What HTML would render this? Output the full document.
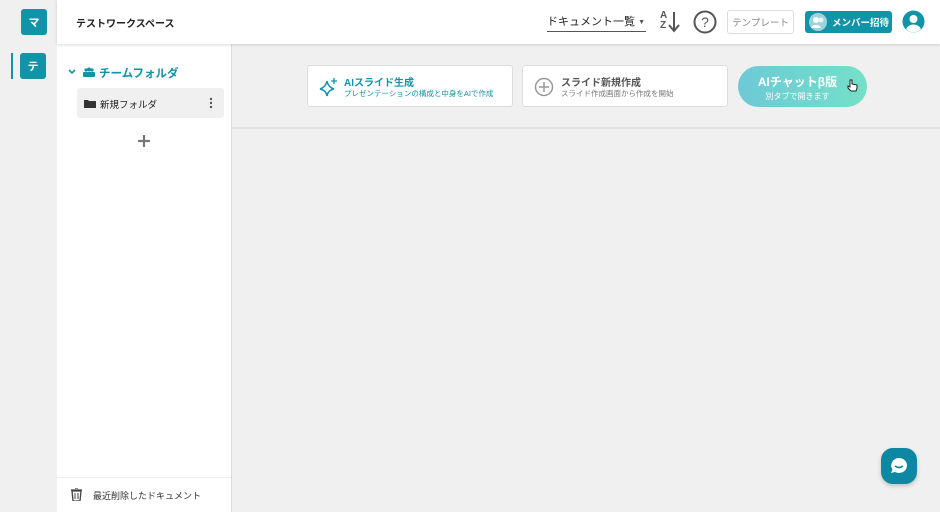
<!DOCTYPE html><html><head><meta charset="utf-8"><style>
*{margin:0;padding:0;box-sizing:border-box}
body{width:940px;height:512px;overflow:hidden;background:#f0f0f0;font-family:"Liberation Sans","Noto Sans CJK JP",sans-serif;position:relative;color:#222}
.abs{position:absolute;white-space:nowrap}
.sq{width:26px;height:26px;background:#1193a8;border-radius:3px;color:#fff;font-size:11px;font-weight:bold;display:flex;align-items:center;justify-content:center}
</style></head><body>
<div class="abs sq" style="left:21px;top:9px">マ</div>
<div class="abs" style="left:11px;top:53px;width:2px;height:26px;background:#1193a8"></div>
<div class="abs sq" style="left:20px;top:53px">テ</div>
<!-- header -->
<div class="abs" style="left:57px;top:0;width:883px;height:44px;background:#fff;box-shadow:0 1px 3px rgba(0,0,0,.15);z-index:2"></div>
<div class="abs" style="left:76px;top:15px;font-size:10px;font-weight:bold;z-index:3">テストワークスペース</div>
<div class="abs" style="left:547px;top:13px;width:99px;height:19px;border-bottom:1px solid #555;font-size:11px;z-index:3">ドキュメント一覧 <span style="font-size:7px;color:#555;vertical-align:1px">▼</span></div>
<div class="abs" style="left:660px;top:11px;font-size:10px;font-weight:bold;color:#555;line-height:10px;z-index:3">A<br>Z</div>
<svg class="abs" style="left:668px;top:10px;z-index:3" width="12" height="24"><path d="M6 2V20M1 15l5 6 5-6" stroke="#555" stroke-width="2" fill="none"/></svg>
<svg class="abs" style="left:692px;top:9px;z-index:3" width="26" height="26"><circle cx="13" cy="13" r="10.5" stroke="#555" stroke-width="2" fill="none"/><text x="13" y="18" font-size="14" text-anchor="middle" fill="#555" font-family="Liberation Sans">?</text></svg>
<div class="abs" style="left:727px;top:10px;width:67px;height:24px;border:1px solid #ddd;border-radius:3px;font-size:9.5px;color:#888;display:flex;align-items:center;justify-content:center;z-index:3">テンプレート</div>
<div class="abs" style="left:805px;top:11px;width:87px;height:22px;background:#1193a8;border-radius:3px;font-size:9.5px;color:#fff;font-weight:bold;display:flex;align-items:center;padding-left:27px;z-index:3">メンバー招待</div>
<svg class="abs" style="left:809px;top:13px;z-index:3" width="18" height="18"><circle cx="9" cy="9" r="9" fill="#9fd3dc"/><circle cx="7" cy="7" r="3" fill="#fff"/><circle cx="12" cy="7" r="2.5" fill="#e8f4f6"/><path d="M2 15c1-4 9-4 10 0z" fill="#fff"/></svg>
<svg class="abs" style="left:902px;top:10px;z-index:3" width="23" height="23"><circle cx="11.5" cy="11.5" r="11" fill="#1193a8"/><circle cx="11.5" cy="9" r="4" fill="#fff"/><path d="M4 19c3-6 12-6 15 0a10 10 0 0 1-15 0z" fill="#fff"/></svg>
<!-- sidebar -->
<div class="abs" style="left:57px;top:44px;width:175px;height:468px;background:#fff;border-right:1px solid #ddd"></div>
<svg class="abs" style="left:68px;top:69px" width="8" height="6"><path d="M1 1l3 3 3-3" stroke="#1193a8" stroke-width="1.6" fill="none"/></svg>
<svg class="abs" style="left:83px;top:67px" width="12" height="10"><circle cx="3" cy="3" r="1.6" fill="#1193a8"/><circle cx="6" cy="2.5" r="2" fill="#1193a8"/><circle cx="9" cy="3" r="1.6" fill="#1193a8"/><rect x="0" y="5" width="12" height="5" rx="1" fill="#1193a8"/></svg>
<div class="abs" style="left:99px;top:65px;font-size:11.5px;font-weight:bold;color:#1193a8">チームフォルダ</div>
<div class="abs" style="left:77px;top:88px;width:147px;height:30px;background:#f0f0f0;border-radius:3px"></div>
<svg class="abs" style="left:84px;top:99px" width="12" height="9"><path d="M0 1h4l1 1h7v7H0z" fill="#333"/></svg>
<div class="abs" style="left:100px;top:97px;font-size:9.5px">新規フォルダ</div>
<svg class="abs" style="left:209px;top:97px" width="4" height="12"><circle cx="2" cy="2" r="1.2" fill="#555"/><circle cx="2" cy="6" r="1.2" fill="#555"/><circle cx="2" cy="10" r="1.2" fill="#555"/></svg>
<svg class="abs" style="left:137px;top:134px" width="14" height="14"><path d="M7 1v12M1 7h12" stroke="#777" stroke-width="2.2"/></svg>
<div class="abs" style="left:57px;top:477px;width:174px;height:1px;background:#eee"></div>
<svg class="abs" style="left:71px;top:488px" width="11" height="13"><path d="M0 2h11M4 0h3M1 3h9l-1 10H2z" stroke="#444" stroke-width="1.3" fill="none"/><path d="M4 5v6M7 5v6" stroke="#444"/></svg>
<div class="abs" style="left:93px;top:489px;font-size:9px;color:#333">最近削除したドキュメント</div>
<!-- main -->
<div class="abs" style="left:232px;top:127px;width:708px;height:2px;background:#e2e2e2"></div>
<div class="abs" style="left:307px;top:65px;width:206px;height:42px;background:#fff;border:1px solid #ddd;border-radius:3px"></div>
<svg class="abs" style="left:319px;top:77px" width="20" height="20"><path d="M8 4Q9 10 15 12Q9 13 8 19Q7 13 1 12Q7 10 8 4z" stroke="#1193a8" stroke-width="1.5" fill="none"/><path d="M15 1v6M12 4h6" stroke="#1193a8" stroke-width="1.3"/></svg>
<div class="abs" style="left:344px;top:74px;font-size:10px;font-weight:bold;color:#1193a8">AIスライド生成</div>
<div class="abs" style="left:344px;top:88px;font-size:7.5px;color:#1193a8">プレゼンテーションの構成と中身をAIで作成</div>
<div class="abs" style="left:522px;top:65px;width:206px;height:42px;background:#fff;border:1px solid #ddd;border-radius:3px"></div>
<svg class="abs" style="left:534px;top:77px" width="20" height="20"><circle cx="10" cy="10" r="8.5" stroke="#999" stroke-width="1.5" fill="none"/><path d="M10 5v10M5 10h10" stroke="#999" stroke-width="1.5"/></svg>
<div class="abs" style="left:561px;top:74px;font-size:10px;font-weight:bold;color:#555">スライド新規作成</div>
<div class="abs" style="left:561px;top:88px;font-size:7.5px;color:#777">スライド作成画面から作成を開始</div>
<div class="abs" style="left:738px;top:66px;width:129px;height:41px;border-radius:21px;background:linear-gradient(90deg,#6dc9d6,#74e0c8);color:#fff;text-align:center">
<div style="font-size:12px;font-weight:bold;margin-top:7px;margin-right:10px">AIチャットβ版</div>
<div style="font-size:8px;margin-top:1px;margin-right:10px">別タブで開きます</div></div>
<svg class="abs" style="left:847px;top:79px" width="11" height="13"><path d="M3 1v7l-2-1v2l3 3h5l1-3V6l-5-1V1z" fill="#fff" stroke="#222" stroke-width="1"/></svg>
<div class="abs" style="left:881px;top:448px;width:36px;height:36px;border-radius:12px;background:#0e88a2;box-shadow:0 2px 4px rgba(0,0,0,.2)"></div>
<svg class="abs" style="left:888px;top:455px" width="22" height="22"><path d="M11 3a8 7.5 0 1 1-4 14l-4 1 1.5-3.5A8 7.5 0 0 1 11 3z" fill="#fff"/><path d="M7 11q4 3 8 0" stroke="#0e88a2" stroke-width="1.6" fill="none"/></svg>
</body></html>
